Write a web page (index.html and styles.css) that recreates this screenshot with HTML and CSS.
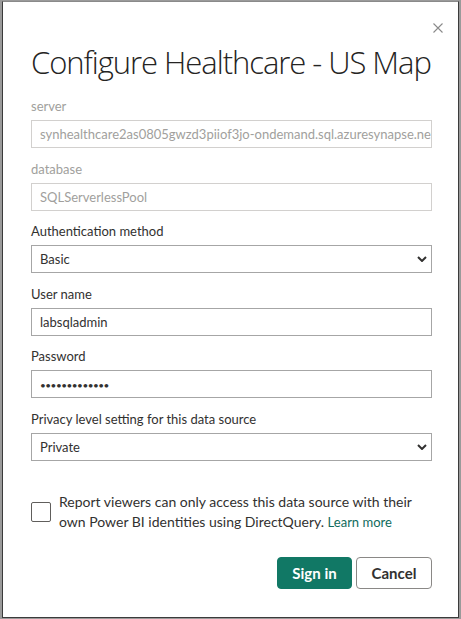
FILE: index.html
```html
<!DOCTYPE html>
<html lang="en">
<head>
<meta charset="utf-8">
<title>Configure Healthcare - US Map</title>
<link rel="stylesheet" href="styles.css">
</head>
<body>
<div class="dialog">
  <button class="close" aria-label="Close">
    <svg width="10" height="10" viewBox="0 0 10 10"><path d="M0.5 0.5 L9.5 9.5 M9.5 0.5 L0.5 9.5" stroke="#8a8a8a" stroke-width="1.1" fill="none"/></svg>
  </button>
  <h1 class="title">Configure Healthcare - US Map</h1>

  <div class="group">
    <div class="label disabled">server</div>
    <div class="field disabled">synhealthcare2as0805gwzd3piiof3jo-ondemand.sql.azuresynapse.net</div>
  </div>
  <div class="group">
    <div class="label disabled">database</div>
    <div class="field disabled">SQLServerlessPool</div>
  </div>
  <div class="group">
    <div class="label">Authentication method</div>
    <div class="field select">
      <span>Basic</span>
      <svg class="chev" width="10" height="6" viewBox="0 0 10 6"><path d="M1 1 L5 5 L9 1" stroke="#323130" stroke-width="2" fill="none"/></svg>
    </div>
  </div>
  <div class="group">
    <div class="label">User name</div>
    <div class="field">labsqladmin</div>
  </div>
  <div class="group">
    <div class="label">Password</div>
    <div class="field pw"><span class="dots">•••••••••••••</span></div>
  </div>
  <div class="group">
    <div class="label">Privacy level setting for this data source</div>
    <div class="field select">
      <span>Private</span>
      <svg class="chev" width="10" height="6" viewBox="0 0 10 6"><path d="M1 1 L5 5 L9 1" stroke="#323130" stroke-width="2" fill="none"/></svg>
    </div>
  </div>

  <div class="check-row">
    <span class="checkbox"></span>
    <p class="check-text">Report viewers can only access this data source with their own Power BI identities using DirectQuery. <a class="learn" href="#">Learn more</a></p>
  </div>

  <div class="actions">
    <button class="btn primary">Sign in</button>
    <button class="btn secondary">Cancel</button>
  </div>
</div>
</body>
</html>
```
FILE: styles.css
```css
* { box-sizing: border-box; }
html, body { margin: 0; padding: 0; }
body {
  background: #9a9a9a;
  font-family: Lato, "Open Sans", sans-serif;
  color: #323130;
  width: 461px;
  height: 619px;
  overflow: hidden;
}
.dialog {
  position: relative;
  margin: 1px 0 0 2px;
  width: 457px;
  height: 617px;
  background: #fff;
  border: 1px solid #3b3b3b;
  border-top-color: #8a8a8a;
  padding: 40px 26px 0 28px;
}
.close {
  position: absolute;
  top: 20px;
  right: 14px;
  width: 12px;
  height: 12px;
  padding: 1px;
  border: 0;
  background: none;
  display: flex;
}
.title {
  margin: 0 0 14px;
  font-family: "Open Sans", sans-serif;
  font-size: 31px;
  line-height: 40px;
  font-weight: 300;
  letter-spacing: -1.05px;
  color: #252423;
  white-space: nowrap;
}
.group {
  display: flex;
  flex-direction: column;
  gap: 4px;
  margin-bottom: 10.5px;
}
.label {
  font-size: 13px;
  line-height: 20px;
  color: #323130;
}
.label.disabled { color: #a19f9d; }
.field {
  height: 28px;
  border: 1px solid #a6a6a6;
  padding: 0 8px;
  font-size: 13px;
  line-height: 26px;
  color: #323130;
  white-space: nowrap;
  overflow: hidden;
}
.field.disabled {
  border-color: #d2d0ce;
  color: #a19f9d;
}
.select {
  display: flex;
  align-items: center;
  justify-content: space-between;
  padding-right: 4px;
}
.dots {
  font-size: 10px;
  letter-spacing: -0.5px;
}
.check-row {
  display: flex;
  align-items: center;
  gap: 8px;
  margin-top: 31px;
}
.checkbox {
  flex: none;
  width: 20px;
  height: 20px;
  border: 1px solid #605e5c;
  border-radius: 2px;
}
.check-text {
  margin: 0;
  font-size: 14px;
  line-height: 20px;
  color: #323130;
}
.learn {
  color: #0f6b5c;
  font-size: 13px;
  text-decoration: none;
}
.actions {
  display: flex;
  justify-content: flex-end;
  gap: 4px;
  margin-top: 25px;
}
.btn {
  height: 32px;
  border-radius: 4px;
  font-family: Lato, "Open Sans", sans-serif;
  font-size: 15px;
  font-weight: 700;
  padding: 0;
}
.primary {
  width: 75px;
  background: #117865;
  border: 1px solid #117865;
  color: #fff;
}
.secondary {
  width: 76px;
  background: #fff;
  border: 1px solid #8a8886;
  color: #323130;
}
```
